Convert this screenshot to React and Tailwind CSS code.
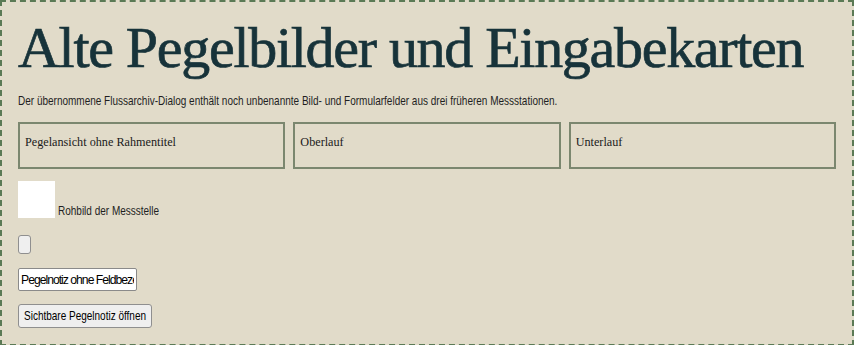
export default function App() {
  return (
    <div className="min-h-[345px] w-full bg-[#e1dbc9] border-2 border-dashed border-[#5b7a55] px-4 pt-[14px] pb-4 font-['Liberation_Sans',Arial,sans-serif] text-[12.2px] text-[#1f1f1f]">
      <h1 className="font-['Liberation_Serif','Times_New_Roman',serif] text-[58px] leading-[64px] text-[#17333a] tracking-[-1.3px] [-webkit-text-stroke:0.7px_#17333a]">
        Alte Pegelbilder und Eingabekarten
      </h1>
      <p className="mt-[14px] leading-[14px] origin-left scale-x-[0.82] whitespace-nowrap">
        Der übernommene Flussarchiv-Dialog enthält noch unbenannte Bild- und Formularfelder aus drei früheren Messstationen.
      </p>

      <div className="mt-[14px] grid grid-cols-3 gap-2">
        <div className="h-[47px] border-2 border-[#7b876f] px-[5px] pt-[9px] font-['Liberation_Serif','Times_New_Roman',serif] text-[12.2px] text-[#1a1a1a]">
          Pegelansicht ohne Rahmentitel
        </div>
        <div className="h-[47px] border-2 border-[#7b876f] px-[5px] pt-[9px] font-['Liberation_Serif','Times_New_Roman',serif] text-[12.2px] text-[#1a1a1a]">
          Oberlauf
        </div>
        <div className="h-[47px] border-2 border-[#7b876f] px-[5px] pt-[9px] font-['Liberation_Serif','Times_New_Roman',serif] text-[12.2px] text-[#1a1a1a]">
          Unterlauf
        </div>
      </div>

      <div className="mt-[12px] flex items-end">
        <div className="h-[37px] w-[37px] bg-white" />
        <span className="ml-[3px] leading-[13px] origin-left scale-x-[0.82] whitespace-nowrap">Rohbild der Messstelle</span>
      </div>

      <div className="mt-[17px]">
        <button className="block h-[19px] w-[13px] rounded-[3px] border border-[#8f8f8f] bg-[#efefef]" />
      </div>

      <div className="mt-[14px]">
        <input
          readOnly
          value="Pegelnotiz ohne Feldbezeichnung"
          className="block h-[23px] w-[119px] rounded-[2px] border border-[#8a8a8a] bg-white px-[2px] text-[12.2px] tracking-[-1px] text-black outline-none"
        />
      </div>

      <div className="mt-[13px]">
        <button className="flex h-[24px] w-[134px] items-center overflow-hidden rounded-[3px] border border-[#8f8f8f] bg-[#efefef] px-[5px] text-[12.2px] text-black">
          <span className="origin-left scale-x-[0.82] whitespace-nowrap">Sichtbare Pegelnotiz öffnen</span>
        </button>
      </div>
    </div>
  );
}
